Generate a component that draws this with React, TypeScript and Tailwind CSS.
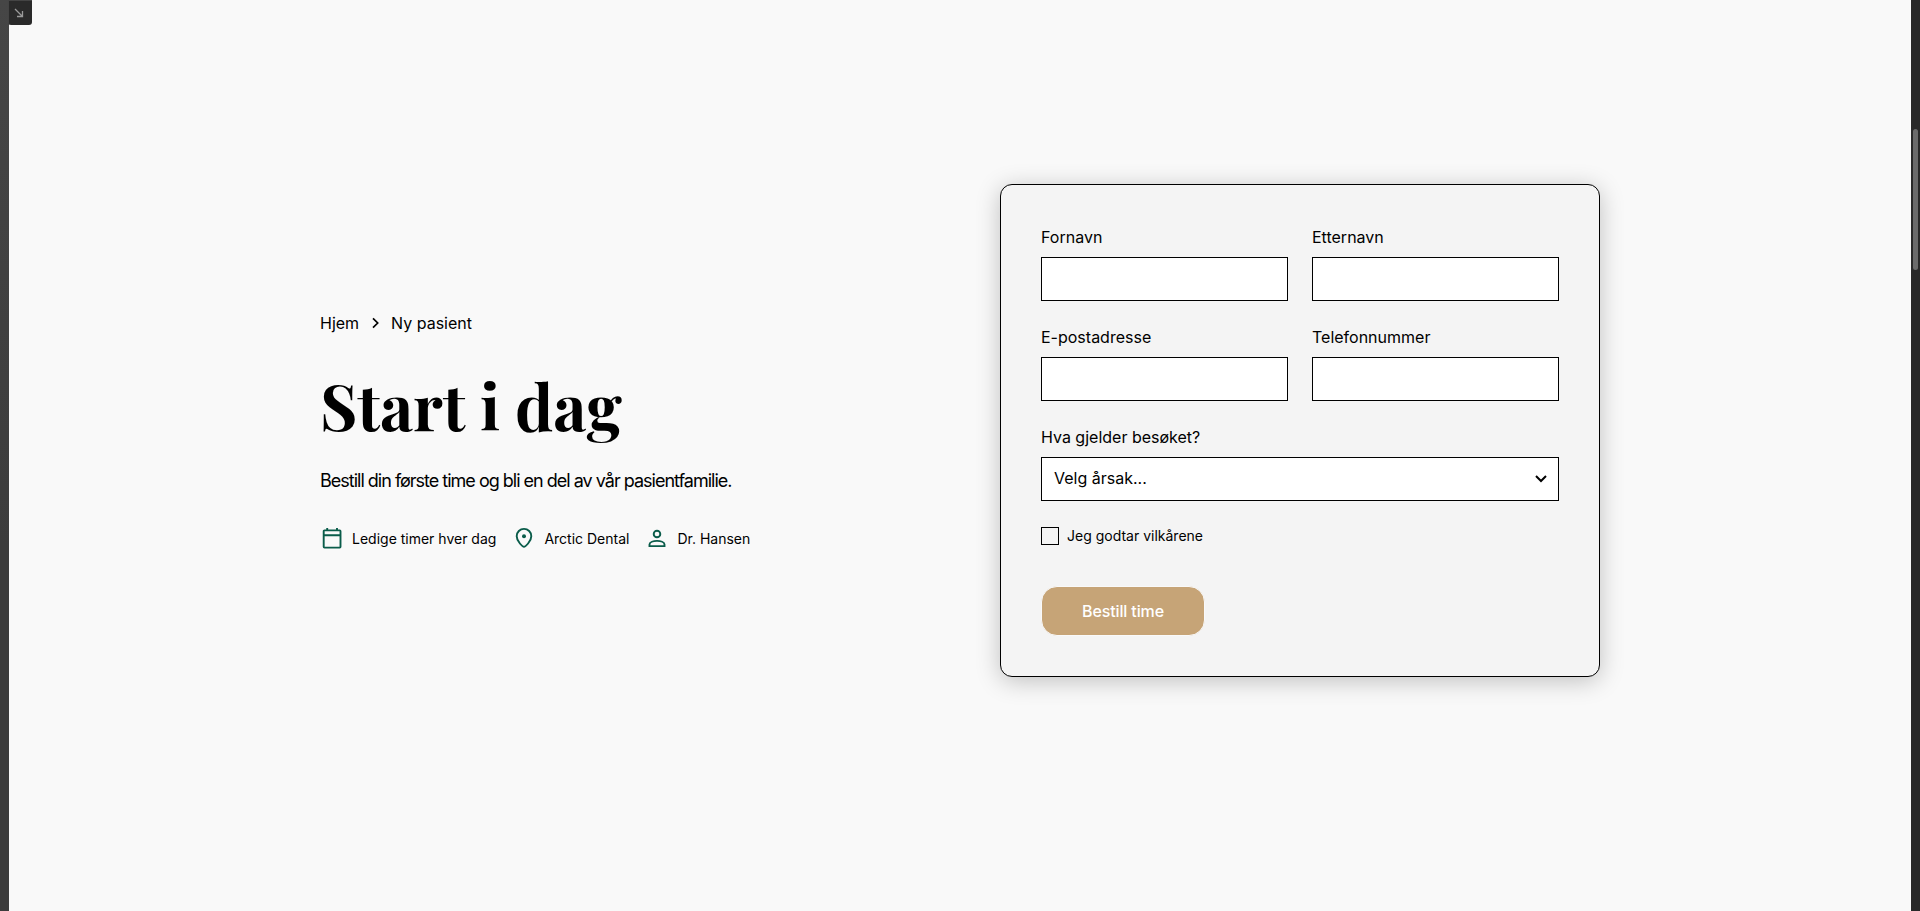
import type { ReactNode } from "react"

const Field = ({ label, children }: { label: string; children?: ReactNode }) => (
  <div className="flex flex-col gap-2">
    <label className="text-base leading-6">{label}</label>
    {children ?? <input className="h-11 w-full border border-black bg-white px-3 outline-none" />}
  </div>
)

const CalendarIcon = () => (
  <svg width="24" height="24" viewBox="0 0 24 24" fill="none" stroke="#0a5c4a" strokeWidth="1.9">
    <rect x="3.7" y="3.4" width="16.8" height="17.2" rx="0.8" />
    <path d="M3.7 8.2h16.8M7.2 1v2M17 1v2" />
  </svg>
)

const PinIcon = () => (
  <svg width="24" height="24" viewBox="0 0 24 24" fill="none" stroke="#0a5c4a" strokeWidth="1.9">
    <path d="M12 19.8c-1.2 0-7.3-5.3-7.3-10.6a7.3 7.3 0 0 1 14.6 0c0 5.3-6.1 10.6-7.3 10.6z" />
    <circle cx="12" cy="9.2" r="2" fill="#0a5c4a" stroke="none" />
  </svg>
)

const PersonIcon = () => (
  <svg width="24" height="24" viewBox="0 0 24 24" fill="none" stroke="#0a5c4a" strokeWidth="1.9">
    <circle cx="12" cy="7" r="3.3" />
    <path d="M4.5 19.1v-1.6c0-2.4 4-3.6 7.5-3.6s7.5 1.2 7.5 3.6v1.6z" />
  </svg>
)

const facts = [
  { icon: <CalendarIcon />, text: "Ledige timer hver dag" },
  { icon: <PinIcon />, text: "Arctic Dental" },
  { icon: <PersonIcon />, text: "Dr. Hansen" },
]

export default function App() {
  return (
    <div className="flex h-[911px] w-[1920px] overflow-hidden bg-[#f9f9f9] font-['Inter',sans-serif] text-black">
      <div className="w-[9px] shrink-0 bg-linear-to-b from-[#464646] to-[#3c3c3c] to-60%" />

      <main className="relative flex grow justify-center pt-[184px]">
        {/* Corner handle */}
        <div className="absolute top-0 -left-px flex h-[25px] w-6 items-center justify-center rounded-b-[3px] border-t border-l border-[#444444] bg-[#2a2a2a]">
          <svg className="-translate-x-[2px]" width="10" height="10" viewBox="0 0 10 10" fill="none" stroke="#9a9a9a" strokeWidth="1.3">
            <path d="M1 1l7.5 7.5M8.5 3v5.5H3" />
          </svg>
        </div>

        <div className="grid h-[493px] w-[1280px] grid-cols-2 gap-20">
          <div className="flex flex-col pt-[127px]">
            <nav className="flex h-6 items-center text-base">
              <span>Hjem</span>
              <svg className="mx-2" width="16" height="16" viewBox="0 0 16 16" fill="none" stroke="#000" strokeWidth="1.7">
                <path d="M6 3.3l4.7 4.7L6 12.7" />
              </svg>
              <span>Ny pasient</span>
            </nav>
            <h1 className="mt-[31px] h-[77px] font-['Playfair_Display','Liberation_Serif',serif] text-[64px] leading-[77px] font-bold">
              Start i dag
            </h1>
            <p className="mt-6 text-lg leading-[27px] tracking-[-1px]">
              Bestill din første time og bli en del av vår pasientfamilie.
            </p>
            <ul className="mt-[33px] flex gap-4">
              {facts.map(({ icon, text }) => (
                <li key={text} className="flex items-center gap-2 text-sm whitespace-nowrap">
                  {icon}
                  {text}
                </li>
              ))}
            </ul>
          </div>

          <form className="flex flex-col rounded-xl border border-black bg-[#f4f4f4] p-10 shadow-[0_4px_24px_rgba(0,0,0,0.23)]">
            <div className="grid grid-cols-2 gap-6">
              <Field label="Fornavn" />
              <Field label="Etternavn" />
              <Field label="E-postadresse" />
              <Field label="Telefonnummer" />
              <div className="col-span-2">
                <Field label="Hva gjelder besøket?">
                  <div className="flex h-11 items-center justify-between border border-black bg-white pr-[9px] pb-0.5 pl-3 text-base">
                    <span>Velg årsak...</span>
                    <svg width="16" height="16" viewBox="0 0 16 16" fill="none" stroke="#000" strokeWidth="2">
                      <path d="M3 6l5 5 5-5" />
                    </svg>
                  </div>
                </Field>
              </div>
            </div>
            <label className="mt-6 flex h-[22px] items-center gap-2 text-sm">
              <span className="size-[18px] border border-black" />
              Jeg godtar vilkårene
            </label>
            <button
              type="button"
              className="mt-[39px] h-[50px] w-[164px] rounded-2xl border border-[#f9f9f9] bg-[#c6a477] text-base font-medium tracking-[-0.12px] text-white">
              Bestill time
            </button>
          </form>
        </div>
      </main>

      {/* Scrollbar */}
      <div className="w-[9px] shrink-0 bg-[#292929] pt-[129px] pl-0.5">
        <div className="h-[141px] w-[5px] rounded-full bg-[#6b6b6b]" />
      </div>
    </div>
  )
}
